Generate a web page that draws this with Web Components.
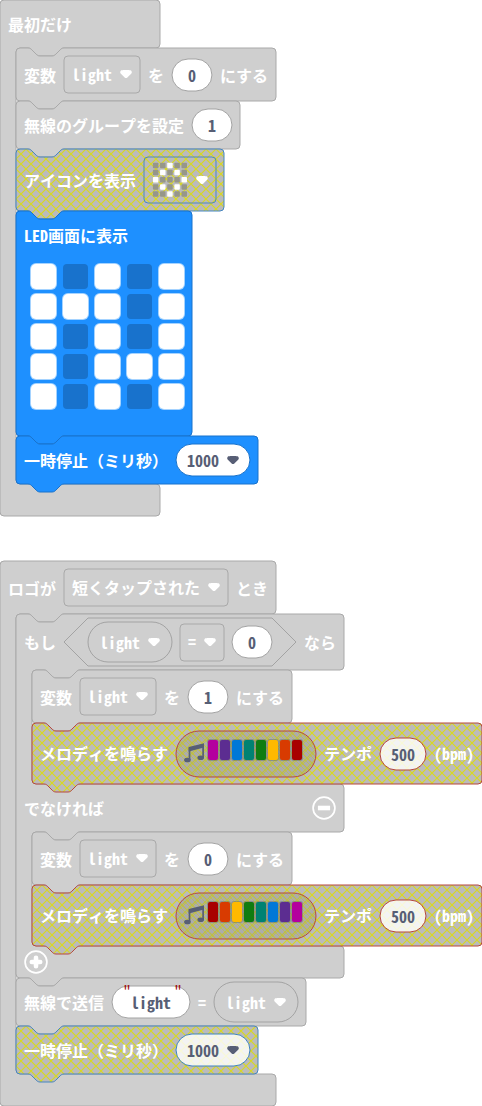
<!DOCTYPE html>
<html lang="ja">
<head>
<meta charset="utf-8">
<title>Blocks</title>
<style>
html,body{margin:0;background:#fff}
body{width:482px;height:1106px;overflow:hidden;font:600 16px/24px "Noto Sans Mono CJK JP","Noto Sans CJK JP",monospace;color:#fff}
</style>
</head>
<body>
<block-workspace>
  <c-block sections="160,48,436;160,32">
    <block-row slot="head0">最初だけ</block-row>
    <block-stack slot="body0">
      <code-block w="260" h="53">変数<drop-field>light</drop-field>を<pill-field w="40">0</pill-field>にする</code-block>
      <code-block w="224" h="48">無線のグループを設定<pill-field w="40">1</pill-field></code-block>
      <code-block w="208" h="62" tone="hatch-blue">アイコンを表示<drop-field h="46" line="#4d89bb"><icon-grid></icon-grid></drop-field></code-block>
      <code-block w="176" h="225" tone="blue" column>LED画面に表示<led-grid></led-grid></code-block>
      <code-block w="242" h="48" tone="blue">一時停止（ミリ秒）<pill-field w="74" arrow line="#1872cc">1000</pill-field></code-block>
    </block-stack>
  </c-block>
  <c-block sections="276,53,460;276,32">
    <block-row slot="head0">ロゴが<drop-field>短くタップされた</drop-field>とき</block-row>
    <block-stack slot="body0">
      <c-block notch sections="328,56,114;328,48,114;328,32">
        <block-row slot="head0">もし<hex-field><pill-field w="84" h="40" clear arrow>light</pill-field><drop-field>=</drop-field><pill-field w="40">0</pill-field></hex-field>なら</block-row>
        <block-stack slot="body0">
          <code-block w="260" h="53">変数<drop-field>light</drop-field>を<pill-field w="40">1</pill-field>にする</code-block>
          <code-block w="450" h="61" tone="hatch-red">メロディを鳴らす<melody-field></melody-field>テンポ<pill-field w="46" line="#b4463c" faded>500</pill-field>(bpm)</code-block>
        </block-stack>
        <block-row slot="head1" spread>でなければ<round-button sign="minus"></round-button></block-row>
        <block-stack slot="body1">
          <code-block w="260" h="53">変数<drop-field>light</drop-field>を<pill-field w="40">0</pill-field>にする</code-block>
          <code-block w="450" h="61" tone="hatch-red">メロディを鳴らす<melody-field reversed></melody-field>テンポ<pill-field w="46" line="#b4463c" faded>500</pill-field>(bpm)</code-block>
        </block-stack>
        <block-row slot="head2"><round-button sign="plus"></round-button></block-row>
      </c-block>
      <code-block w="290" h="48">無線で送信<pill-field w="78" quoted>light</pill-field>=<pill-field w="84" h="40" clear arrow>light</pill-field></code-block>
      <code-block w="242" h="48" tone="hatch-blue">一時停止（ミリ秒）<pill-field w="74" arrow line="#3f83c0" faded>1000</pill-field></code-block>
    </block-stack>
  </c-block>
</block-workspace>

<script>
const NOTCH = 'c2,0 3,1 4,2 l4,4 c1,1 2,2 4,2 h12 c2,0 3,-1 4,-2 l4,-4 c1,-1 2,-2 4,-2';
const TAB = 'c-2,0 -3,1 -4,2 l-4,4 c-1,1 -2,2 -4,2 h-12 c-2,0 -3,-1 -4,-2 l-4,-4 c-1,-1 -2,-2 -4,-2';
const TONES = {
  gray: ['#cfcfcf', '#a9a9a9'],
  blue: ['#1e90ff', '#1872cc'],
  'hatch-blue': ['url(#hatch)', '#4585c0'],
  'hatch-red': ['url(#hatch)', '#b5493f']
};
const HATCH = '<defs><pattern id="hatch" width="10" height="10" patternUnits="userSpaceOnUse"><rect width="10" height="10" fill="#bbb"/><path d="M0 0L10 10M10 0L0 10" stroke="#d8d820" stroke-width="1.2" fill="none"/></pattern></defs>';
const ARROW = '<svg class="arrow" width="12" height="8" viewBox="-.2 0 13.1 8.79" preserveAspectRatio="none"><path fill="currentColor" d="M12.71,2.44A2.41,2.41,0,0,1,12,4.16L8.08,8.08a2.45,2.45,0,0,1-3.45,0L.72,4.16A2.42,2.42,0,0,1,0,2.44,2.48,2.48,0,0,1,.71.71C1,.47,1.43,0,6.36,0S11.75,.46,12,.71A2.44,2.44,0,0,1,12.71,2.44Z"/></svg>';
const outline = (w, h, d, tone) => `<svg class="shape" width="${w + 1}" height="${h + 9}">${HATCH}<path d="${d}" fill="${TONES[tone][0]}" stroke="${TONES[tone][1]}"/></svg>`;
const frame = (r, fill, stroke, defs = '') => `<svg class="shape" width="100%" height="100%">${defs}<rect width="100%" height="100%" rx="${r}" fill="${fill}" stroke="${stroke}"/></svg>`;
const SHAPE = '.shape{position:absolute;left:0;top:0;z-index:-1;overflow:visible}';
const ARROW_CSS = '.arrow{display:block;flex:none;margin-top:1px}';

function define(name, render) {
  customElements.define(name, class extends HTMLElement {
    constructor() { super(); this.attachShadow({ mode: 'open' }); }
    connectedCallback() { this.shadowRoot.innerHTML = render(this); }
  });
}
const num = (el, name, fallback) => Number(el.getAttribute(name) || fallback);

define('block-workspace', () => '<style>:host{display:flex;flex-direction:column;align-items:flex-start;gap:45px}</style><slot></slot>');
define('block-stack', () => '<style>:host{display:flex;flex-direction:column;align-items:flex-start}</style><slot></slot>');
define('block-row', el => `<style>:host{display:flex;align-items:center;gap:8px;padding:0 8px;height:100%;box-sizing:border-box;white-space:nowrap;${el.hasAttribute('spread') ? 'justify-content:space-between' : ''}}</style><slot></slot>`);

define('code-block', el => {
  const w = num(el, 'w'), h = num(el, 'h'), column = el.hasAttribute('column'), tone = el.getAttribute('tone') || 'gray';
  const d = `M0,4 a4,4 0 0 1 4,-4 h8 ${NOTCH} H${w - 4} a4,4 0 0 1 4,4 V${h - 4} a4,4 0 0 1 -4,4 H48 ${TAB} H4 a4,4 0 0 1 -4,-4 Z`;
  return `<style>:host{position:relative;isolation:isolate;display:flex;box-sizing:border-box;width:${w}px;height:${h}px;white-space:nowrap;gap:8px;padding:0 8px;
    ${column ? 'flex-direction:column;padding-top:12px;gap:17px' : 'align-items:center'}${tone === 'hatch-red' ? ';padding-bottom:1px' : ''}}
    ${tone === 'hatch-red' ? '::slotted(*){margin-top:1px}' : ''}${SHAPE}</style>${outline(w, h, d, tone)}<slot></slot>`;
});

define('c-block', el => {
  const parts = el.getAttribute('sections').split(';').map(s => s.split(',').map(Number));
  const notch = el.hasAttribute('notch');
  let y = 0, d = `M0,4 a4,4 0 0 1 4,-4 ${notch ? 'h8 ' + NOTCH : ''}`, html = '';
  parts.forEach(([w, head, mouth], i) => {
    d += ` H${w - 4} a4,4 0 0 1 4,4 V${y + head - 4} a4,4 0 0 1 -4,4`;
    html += `<div style="width:${w}px;height:${head}px"><slot name="head${i}"></slot></div>`;
    y += head;
    if (mouth) {
      d += ` H64 ${TAB} H20 a4,4 0 0 0 -4,4 V${y + mouth - 4} a4,4 0 0 0 4,4`;
      html += `<div style="height:${mouth}px;padding-left:16px"><slot name="body${i}"></slot></div>`;
      y += mouth;
    }
  });
  d += notch ? ` H48 ${TAB} H4 a4,4 0 0 1 -4,-4 Z` : ' H4 a4,4 0 0 1 -4,-4 Z';
  return `<style>:host{position:relative;isolation:isolate;display:block;width:${parts[0][0]}px;height:${y}px}${SHAPE}</style>${outline(parts[0][0], y, d, 'gray')}${html}`;
});

define('drop-field', el => `<style>:host{position:relative;isolation:isolate;display:flex;align-items:center;gap:8px;box-sizing:border-box;height:${num(el, 'h', 37)}px;padding:0 8px 2px}${SHAPE}${ARROW_CSS}</style>${frame(4, 'none', el.getAttribute('line') || '#a9a9a9')}<slot></slot>${ARROW}`);

define('pill-field', el => {
  const w = num(el, 'w'), h = num(el, 'h', 32), clear = el.hasAttribute('clear'), quoted = el.hasAttribute('quoted');
  const bg = clear ? 'none' : el.hasAttribute('faded') ? 'rgba(255,255,255,.82)' : '#fff';
  return `<style>:host{position:relative;isolation:isolate;display:flex;align-items:center;justify-content:center;gap:8px;box-sizing:border-box;width:${w}px;height:${h}px;color:${clear ? '#fff' : '#575e75'}}
  ${SHAPE}${ARROW_CSS}.arrow{margin-top:0}.q{position:absolute;top:-2px;color:#a31515;font-size:16px;line-height:16px;font-weight:400}.l{left:11px}.r{right:8px}</style>
  ${frame(h / 2, bg, el.getAttribute('line') || '#a3a3a3')}${quoted ? '<span class="q l">"</span>' : ''}<slot></slot>${quoted ? '<span class="q r">"</span>' : ''}${el.hasAttribute('arrow') ? ARROW : ''}`;
});

define('hex-field', () => `<style>:host{position:relative;isolation:isolate;display:flex;align-items:center;gap:8px;width:184px;height:48px;padding:0 24px}${SHAPE}</style>
  <svg class="shape" width="232" height="48"><path d="M24,0H208L232,24L208,48H24L0,24Z" fill="none" stroke="#a3a3a3"/></svg><slot></slot>`);

define('led-grid', () => {
  const rows = ['10101', '11101', '10101', '10111', '10101'];
  return `<style>:host{display:grid;grid-template-columns:repeat(5,25px);gap:5px 7px;padding-left:7px}
  i{width:25px;height:25px;border-radius:4px;background:#1872cc}i.on{background:#fff;box-shadow:0 0 0 1px #a5d3ff;border-radius:5px}</style>${[...rows.join('')].map(c => `<i class="${c === '1' ? 'on' : ''}"></i>`).join('')}`;
});

define('icon-grid', () => {
  const on = '0010001010100010101000100';
  return `<style>:host{display:block;width:36px;height:36px;margin-top:1px}svg{display:block}</style><svg width="36" height="36">${[...on].map((c, i) =>
    `<rect x="${.9 + i % 5 * 7.15}" y="${.7 + Math.floor(i / 5) * 7.15}" width="5.5" height="5.5" rx=".8" fill="${c === '1' ? '#fff' : '#96968a'}"/>`).join('')}</svg>`;
});

define('melody-field', el => {
  let colors = ['#b4009e', '#5c2d91', '#0078d7', '#008272', '#107c10', '#ffb900', '#d83b01', '#a80000'];
  if (el.hasAttribute('reversed')) colors.reverse();
  const inner = '<defs><pattern id="inner" width="10" height="10" patternUnits="userSpaceOnUse"><rect width="10" height="10" fill="#888" fill-opacity=".3"/><path d="M0 0L10 10M10 0L0 10" stroke="#cc0" stroke-opacity=".45"/></pattern></defs>';
  return `<style>:host{position:relative;isolation:isolate;display:flex;align-items:center;box-sizing:border-box;width:140px;height:46px;padding:0 8px}
  ${SHAPE}.note{flex:none;margin:0 4px 2px 0}.bars{display:flex;gap:2px;margin-top:-7px}i{width:10px;height:20px;border-radius:2px;box-shadow:0 0 0 1px rgba(90,100,100,.4)}</style>
  ${frame(23, 'url(#inner)', '#b5493f', inner)}
  <svg class="note" width="20" height="20" viewBox="0 0 20 20"><path d="M5.5 4.2V17M19.1 2V14.8" fill="none" stroke="#575e75" stroke-width="1.7"/><path d="M4.7 4 20 .2V4.6L4.7 8.4Z" fill="#575e75"/><ellipse cx="3.4" cy="17" rx="3.3" ry="2.3" fill="#575e75"/><ellipse cx="16.7" cy="14.8" rx="3.3" ry="2.3" fill="#575e75"/></svg>
  <div class="bars">${colors.map(c => `<i style="background:${c}"></i>`).join('')}</div>`;
});

define('round-button', el => `<style>:host{display:block;width:24px;height:24px;margin-top:-1px}svg{display:block}</style>
  <svg width="24" height="24" viewBox="0 0 24 24" fill="none" stroke="#fff"><circle cx="12" cy="12" r="10.9" stroke-width="1.7"/>${el.getAttribute('sign') === 'plus' ? '<path d="M7.8 12H16.2M12 7.8V16.2" stroke-width="4.6" stroke-linecap="round"/>' : '<path d="M5.9 12H18.1" stroke-width="4.6"/>'}</svg>`);
</script>
</body>
</html>
